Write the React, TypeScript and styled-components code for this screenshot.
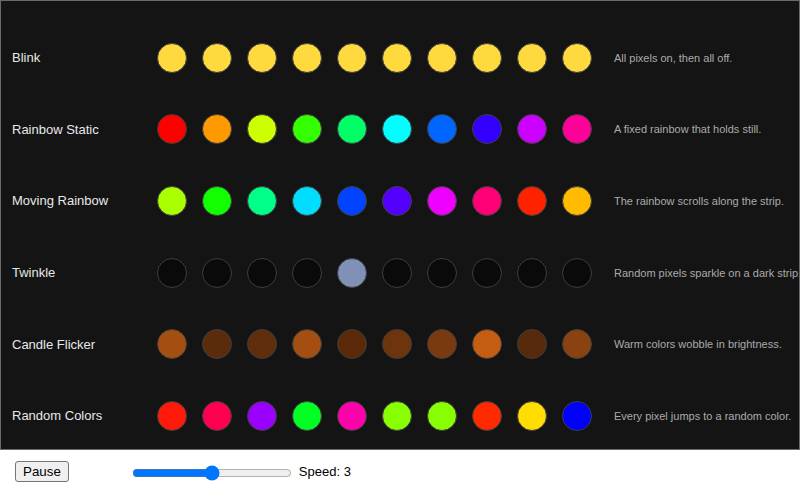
import React, { useState } from "react";
import styled, { createGlobalStyle } from "styled-components";

const Global = createGlobalStyle`
  html, body { margin: 0; padding: 0; background: #ffffff; }
  body { font-family: "Liberation Sans", Arial, sans-serif; }
  * { box-sizing: border-box; }
`;

const Panel = styled.div`
  height: 450px;
  border: 1px solid #6a6a6a;
  background: #141414;
  overflow: hidden;
  padding-top: 21px;
  display: flex;
  flex-direction: column;
`;

const Row = styled.div`
  height: 71.6px;
  flex: none;
  display: flex;
  align-items: center;
  padding-left: 11px;
`;

const Label = styled.div`
  width: 145.3px;
  flex: none;
  color: #e8e8e8;
  font-size: 13px;
  white-space: nowrap;
`;

const Strip = styled.div`
  display: flex;
  gap: 15px;
  flex: none;
`;

const Pixel = styled.div<{ $c: string }>`
  width: 30px;
  height: 30px;
  border-radius: 50%;
  background: ${(p) => p.$c};
  border: 1px solid #3e3e3e;
  flex: none;
`;

const Desc = styled.div`
  margin-left: 21.7px;
  color: #ababab;
  font-size: 11px;
  white-space: nowrap;
`;

const Controls = styled.div`
  display: flex;
  align-items: center;
  padding: 11px 15px;
`;

const Button = styled.button`
  font-family: "Liberation Sans", Arial, sans-serif;
  font-size: 13.33px;
  padding: 1px 7px;
  height: 21px;
  border: 1px solid #767676;
  border-radius: 3px;
  background: #efefef;
  color: #000;
  line-height: 16px;
`;

const SpeedGroup = styled.label`
  display: flex;
  align-items: center;
  margin-left: 63px;
  gap: 7px;
  font-size: 13px;
  color: #000;
`;

const Range = styled.input`
  width: 160px;
  margin: 2px 0 0 0;
`;

type Effect = { name: string; desc: string; colors: string[] };

const effects: Effect[] = [
  {
    name: "Blink",
    desc: "All pixels on, then all off.",
    colors: Array(10).fill("#ffda3f"),
  },
  {
    name: "Rainbow Static",
    desc: "A fixed rainbow that holds still.",
    colors: ["#ff0000", "#ff9900", "#ccff00", "#33ff00", "#00ff66", "#00ffff", "#0066ff", "#3300ff", "#cc00ff", "#ff0099"],
  },
  {
    name: "Moving Rainbow",
    desc: "The rainbow scrolls along the strip.",
    colors: ["#aaff00", "#11ff00", "#00ff88", "#00ddff", "#0044ff", "#5500ff", "#ee00ff", "#ff0077", "#ff2200", "#ffbb00"],
  },
  {
    name: "Twinkle",
    desc: "Random pixels sparkle on a dark strip.",
    colors: ["#0a0a0a", "#0a0a0a", "#0a0a0a", "#0a0a0a", "#8090b6", "#0a0a0a", "#0a0a0a", "#0a0a0a", "#0a0a0a", "#0a0a0a"],
  },
  {
    name: "Candle Flicker",
    desc: "Warm colors wobble in brightness.",
    colors: ["#a44f12", "#5a2c0c", "#5f2e0c", "#a44e12", "#5a2a0a", "#6d340e", "#7a3a10", "#c55d12", "#562a0a", "#8a4210"],
  },
  {
    name: "Random Colors",
    desc: "Every pixel jumps to a random color.",
    colors: ["#ff1a0a", "#ff0050", "#9900ff", "#00ff22", "#ff00aa", "#88ff00", "#88ff00", "#ff2a00", "#ffdd00", "#0000ff"],
  },
];

export default function App() {
  const [speed, setSpeed] = useState(3);
  const [paused, setPaused] = useState(false);
  return (
    <>
      <Global />
      <Panel>
        {effects.map((e) => (
          <Row key={e.name}>
            <Label>{e.name}</Label>
            <Strip>
              {e.colors.map((c, i) => (
                <Pixel key={i} $c={c} />
              ))}
            </Strip>
            <Desc>{e.desc}</Desc>
          </Row>
        ))}
      </Panel>
      <Controls>
        <Button onClick={() => setPaused(!paused)}>{paused ? "Play" : "Pause"}</Button>
        <SpeedGroup>
          <Range
            type="range"
            min={1}
            max={5}
            value={speed}
            onChange={(ev) => setSpeed(Number(ev.target.value))}
          />
          <span>Speed: {speed}</span>
        </SpeedGroup>
      </Controls>
    </>
  );
}
